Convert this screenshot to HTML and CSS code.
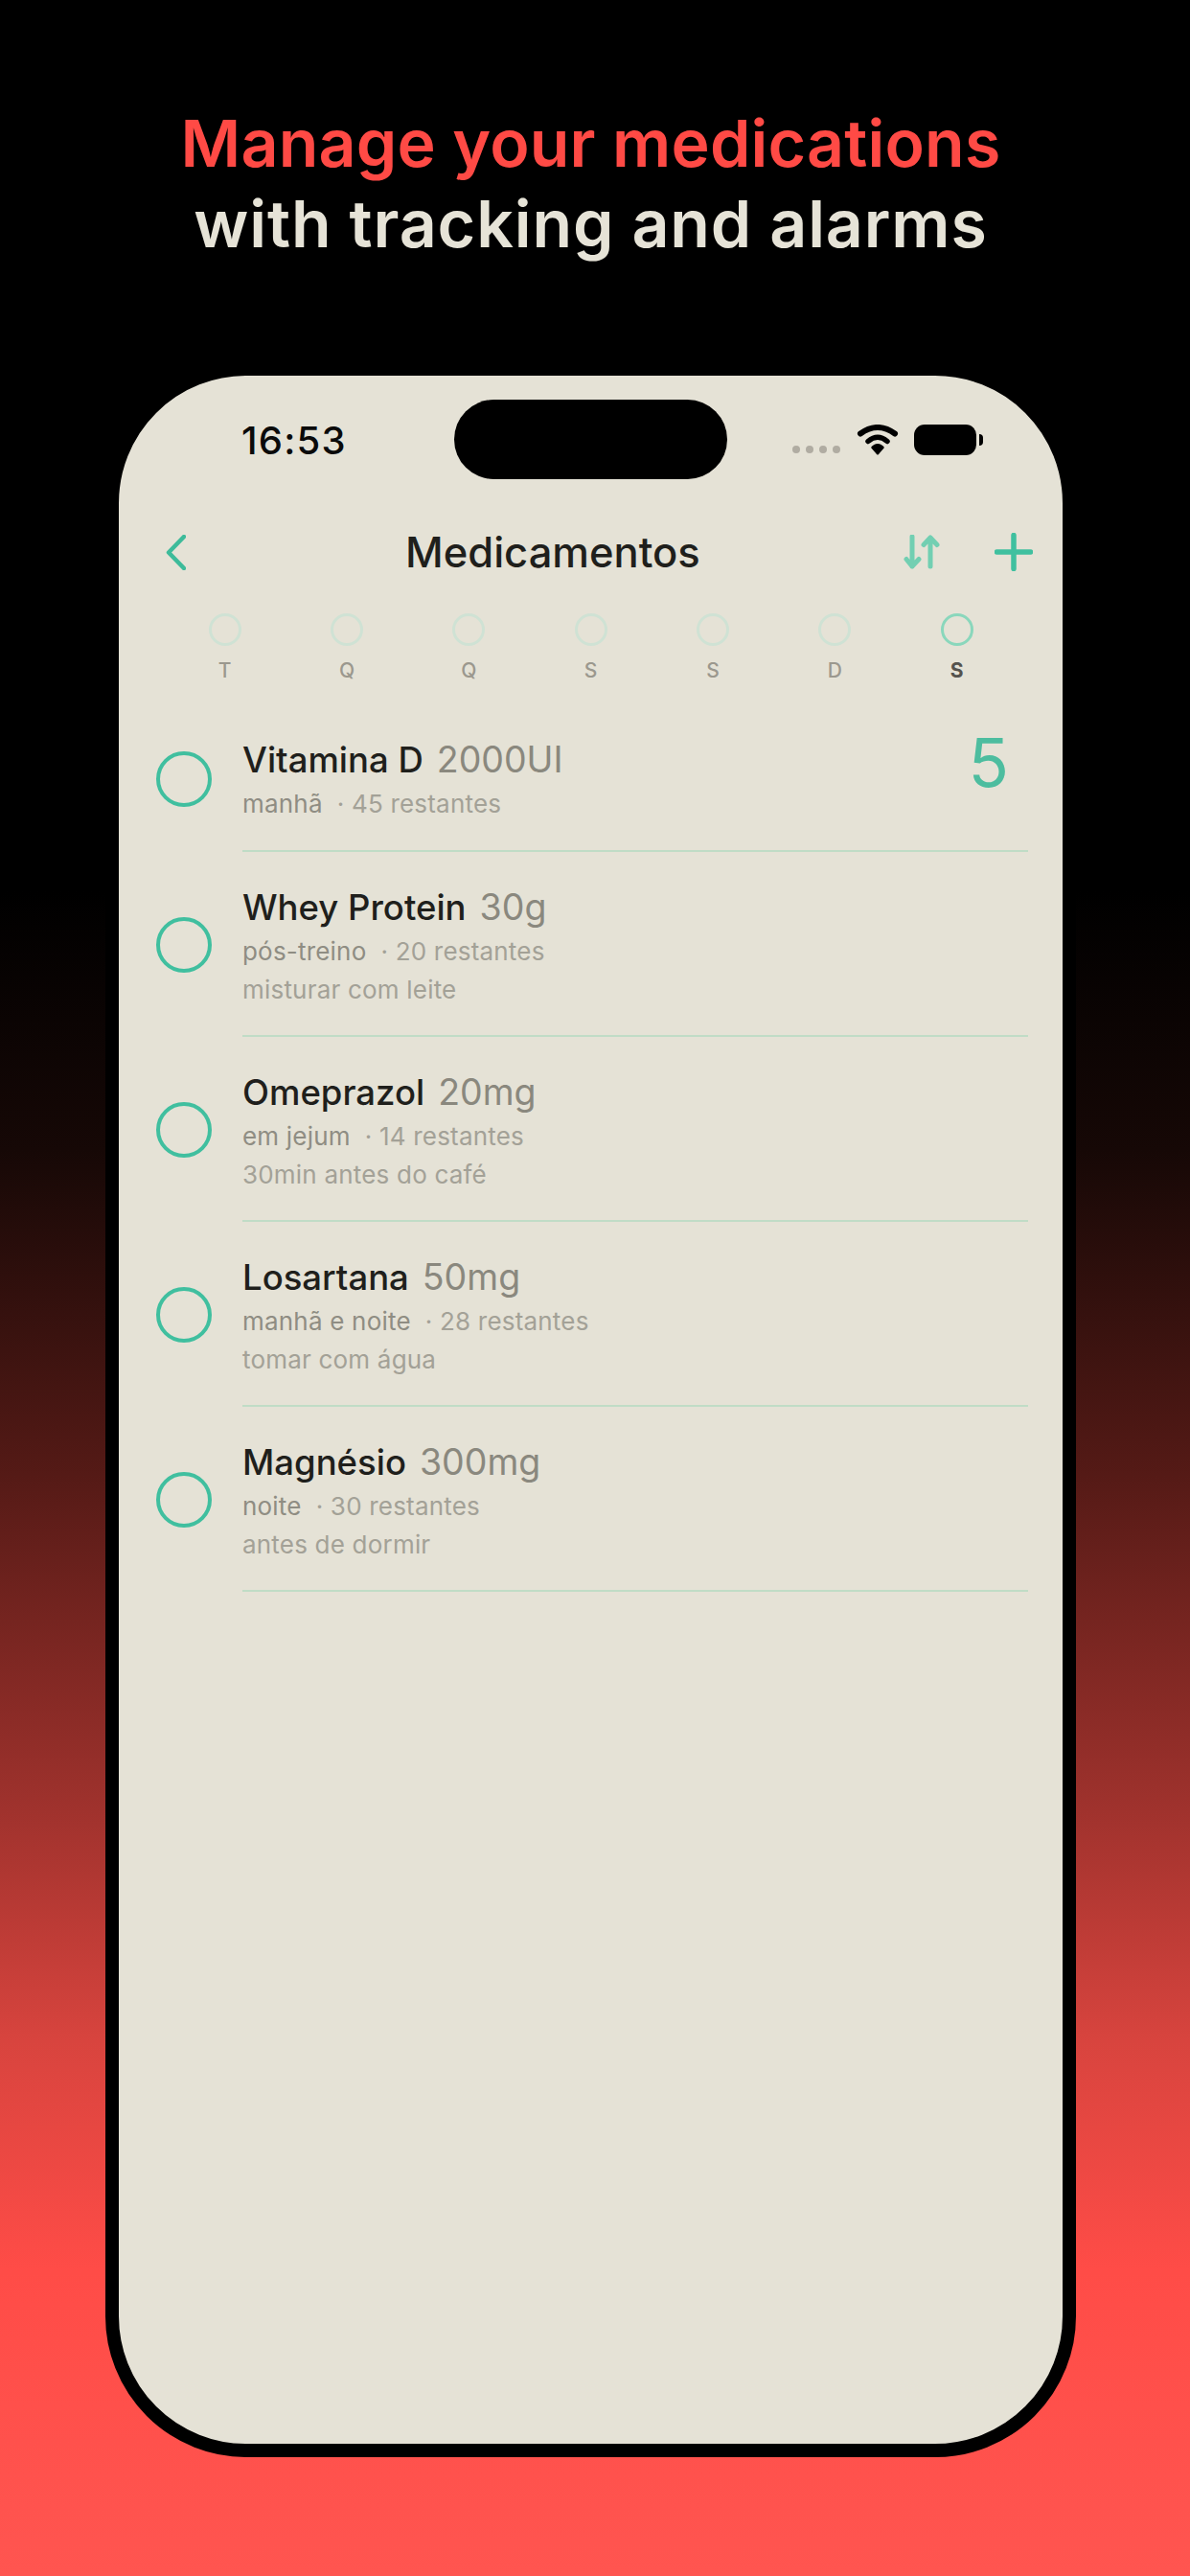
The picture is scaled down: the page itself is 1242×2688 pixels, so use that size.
FILE: index.html
```html
<!DOCTYPE html>
<html lang="pt">
<head>
    <meta charset="UTF-8">
    <meta name="viewport" content="width=device-width, initial-scale=1.0">
    <title>Medicamentos</title>
    <link rel="stylesheet" href="styles.css">
</head>
<body>

<div id="stage">
    <h1 class="headline">
        <span class="headline-red">Manage your medications</span>
        <span class="headline-light">with tracking and alarms</span>
    </h1>

    <div id="phone">
        <div class="island"></div>

        <!-- Status bar -->
        <div class="status">
            <span class="status-time">16:53</span>
            <div class="status-dots"><i></i><i></i><i></i><i></i></div>
            <svg class="wifi" viewBox="0 0 44 32">
                <path d="M4 9.500 Q22 -3.500 40 9.500" fill="none" stroke="#000" stroke-width="6" stroke-linecap="round"/>
                <path d="M12 17.500 Q22 9 32 17.500" fill="none" stroke="#000" stroke-width="5.500" stroke-linecap="round"/>
                <path d="M22 20 Q26 20 29 24 L23 31 Q22 32 21 31 L15 24 Q18 20 22 20 Z" fill="#000"/>
            </svg>
            <div class="battery"></div>
            <div class="battery-cap"></div>
        </div>

        <!-- Nav -->
        <div class="nav">
            <svg class="nav-back" viewBox="0 0 21 37">
                <path d="M19 2 L3 18.500 L19 35" fill="none" stroke="#3dbb9a" stroke-width="4.500" stroke-linecap="round" stroke-linejoin="round"/>
            </svg>
            <h2 class="nav-title">Medicamentos</h2>
            <svg class="nav-sort" viewBox="0 0 38 36">
                <path d="M9 2 V33 M3 25.500 L9 33 L16 25.500" fill="none" stroke="#72cfb2" stroke-width="5" stroke-linecap="round" stroke-linejoin="round"/>
                <path d="M28 33 V3 M21 10.500 L28 3 L35 10.500" fill="none" stroke="#72cfb2" stroke-width="5" stroke-linecap="round" stroke-linejoin="round"/>
            </svg>
            <svg class="nav-add" viewBox="0 0 40 40">
                <path d="M20 2.500 V37.500 M2.500 20 H37.500" fill="none" stroke="#3fc09f" stroke-width="5.500" stroke-linecap="round"/>
            </svg>
        </div>

        <!-- Week -->
        <div class="week">
            <div class="day"><span class="day-ring"></span><span class="day-label">T</span></div>
            <div class="day"><span class="day-ring"></span><span class="day-label">Q</span></div>
            <div class="day"><span class="day-ring"></span><span class="day-label">Q</span></div>
            <div class="day"><span class="day-ring"></span><span class="day-label">S</span></div>
            <div class="day"><span class="day-ring"></span><span class="day-label">S</span></div>
            <div class="day"><span class="day-ring"></span><span class="day-label">D</span></div>
            <div class="day day-today"><span class="day-ring"></span><span class="day-label">S</span></div>
        </div>

        <!-- Lista -->
        <div class="list">
            <div class="med">
                <span class="med-check"></span>
                <div class="med-body">
                    <div class="med-info">
                        <div class="med-title">Vitamina D<span class="med-dose">2000UI</span></div>
                        <div class="med-sub">manhã<span class="med-left">· 45 restantes</span></div>
                    </div>
                    <span class="med-count">5</span>
                </div>
            </div>
            <div class="med">
                <span class="med-check"></span>
                <div class="med-body">
                    <div class="med-info">
                        <div class="med-title">Whey Protein<span class="med-dose">30g</span></div>
                        <div class="med-sub">pós-treino<span class="med-left">· 20 restantes</span></div>
                        <div class="med-note">misturar com leite</div>
                    </div>
                </div>
            </div>
            <div class="med">
                <span class="med-check"></span>
                <div class="med-body">
                    <div class="med-info">
                        <div class="med-title">Omeprazol<span class="med-dose">20mg</span></div>
                        <div class="med-sub">em jejum<span class="med-left">· 14 restantes</span></div>
                        <div class="med-note">30min antes do café</div>
                    </div>
                </div>
            </div>
            <div class="med">
                <span class="med-check"></span>
                <div class="med-body">
                    <div class="med-info">
                        <div class="med-title">Losartana<span class="med-dose">50mg</span></div>
                        <div class="med-sub">manhã e noite<span class="med-left">· 28 restantes</span></div>
                        <div class="med-note">tomar com água</div>
                    </div>
                </div>
            </div>
            <div class="med">
                <span class="med-check"></span>
                <div class="med-body">
                    <div class="med-info">
                        <div class="med-title">Magnésio<span class="med-dose">300mg</span></div>
                        <div class="med-sub">noite<span class="med-left">· 30 restantes</span></div>
                        <div class="med-note">antes de dormir</div>
                    </div>
                </div>
            </div>
        </div>
    </div>
</div>

</body>
</html>
```

FILE: styles.css
```css
* {
    box-sizing: border-box;
}

html, body {
    margin: 0;
    padding: 0;
}

body {
    height: 2688px;
    overflow: hidden;
    font-family: Inter, "Noto Sans", sans-serif;
    background: linear-gradient(to bottom, #000 0, #000 930px, #160806 1200px, #551a16 1540px, #a0322d 1890px, #d8443e 2130px, #ff4c47 2370px, #ff5550 100%);
}

#stage {
    width: 1013px;
    margin-left: 110px;
    padding-top: 107px;
}

.headline {
    margin: 0;
    font-size: 68px;
    line-height: 84px;
    font-weight: 600;
    text-align: center;
}

.headline span {
    display: block;
}

.headline-red {
    letter-spacing: 0.2px;
    color: #ff4a45;
}

.headline-light {
    letter-spacing: 0.9px;
    color: #e6e3d7;
}

#phone {
    position: relative;
    height: 2186px;
    margin-top: 103px;
    border: 14px solid #000;
    border-radius: 147px;
    background-color: #e5e2d6;
}

.island {
    position: absolute;
    left: 350px;
    top: 25px;
    width: 285px;
    height: 83px;
    border-radius: 42px;
    background-color: #000;
}

.status {
    display: flex;
    align-items: center;
    height: 134px;
    padding-left: 128px;
}

.status-time {
    width: 108px;
    font-size: 40px;
    font-weight: 500;
    letter-spacing: 1.2px;
    white-space: nowrap;
    color: #0a0a0a;
}

.status-dots {
    display: flex;
    gap: 6px;
    margin-left: 467px;
    margin-top: 20px;
}

.status-dots i {
    width: 8px;
    height: 8px;
    border-radius: 50%;
    background-color: #b0aca2;
}

.wifi {
    width: 44px;
    height: 32px;
    margin-left: 17px;
}

.battery {
    width: 65px;
    height: 32px;
    margin-left: 16px;
    border-radius: 11px;
    background-color: #000;
}

.battery-cap {
    width: 4px;
    height: 12px;
    margin-left: 3px;
    border-radius: 0 5px 5px 0;
    background-color: #000;
}

.nav {
    display: flex;
    align-items: center;
    height: 100px;
    padding-left: 49px;
    padding-right: 31px;
}

.nav-back {
    width: 21px;
    height: 37px;
}

.nav-title {
    margin: 0 0 0 229px;
    font-size: 43.500px;
    font-weight: 500;
    color: #1f1f1c;
}

.nav-sort {
    width: 38px;
    height: 36px;
    margin-left: auto;
}

.nav-add {
    width: 40px;
    height: 40px;
    margin-left: 57px;
}

.week {
    display: grid;
    grid-template-columns: repeat(7, 127.33px);
    margin-top: 14px;
    margin-left: 47px;
}

.day {
    display: flex;
    flex-direction: column;
    align-items: center;
}

.day-ring {
    width: 34px;
    height: 34px;
    border: 3px solid #cfe2d4;
    border-radius: 50%;
}

.day-label {
    margin-top: 11px;
    font-size: 21px;
    line-height: 30px;
    font-weight: 450;
    color: #9b988e;
}

.day-today .day-ring {
    border-color: #8ad7bc;
}

.day-today .day-label {
    font-weight: 700;
    color: #55534e;
}

.list {
    margin-top: 21px;
}

.med {
    display: flex;
    align-items: center;
    padding-left: 39px;
    padding-right: 36px;
}

.med-check {
    flex: none;
    width: 58px;
    height: 58px;
    margin-right: 32px;
    border: 4px solid #40bf9f;
    border-radius: 50%;
}

.med-body {
    flex: 1;
    display: flex;
    justify-content: space-between;
    padding-top: 36px;
    padding-bottom: 27px;
    border-bottom: 2px solid #c0dcc6;
}

.med:first-child .med-body {
    padding-top: 35px;
    padding-bottom: 28px;
}

.med-title {
    font-size: 36.500px;
    line-height: 44px;
    font-weight: 450;
    color: #1f1f1c;
}

.med-dose {
    margin-left: 14px;
    font-size: 37.500px;
    font-weight: 400;
    color: #8a887e;
}

.med-sub {
    margin-top: 4px;
    font-size: 26px;
    line-height: 40px;
    letter-spacing: 0.2px;
    color: #8f8d83;
}

.med-left {
    margin-left: 15px;
    color: #a3a197;
}

.med-note {
    font-size: 26px;
    line-height: 40px;
    letter-spacing: 0.2px;
    color: #a3a197;
}

.med-count {
    margin-right: 20px;
    margin-top: -15px;
    font-size: 70px;
    line-height: 80px;
    color: #4dbd9f;
}
```
